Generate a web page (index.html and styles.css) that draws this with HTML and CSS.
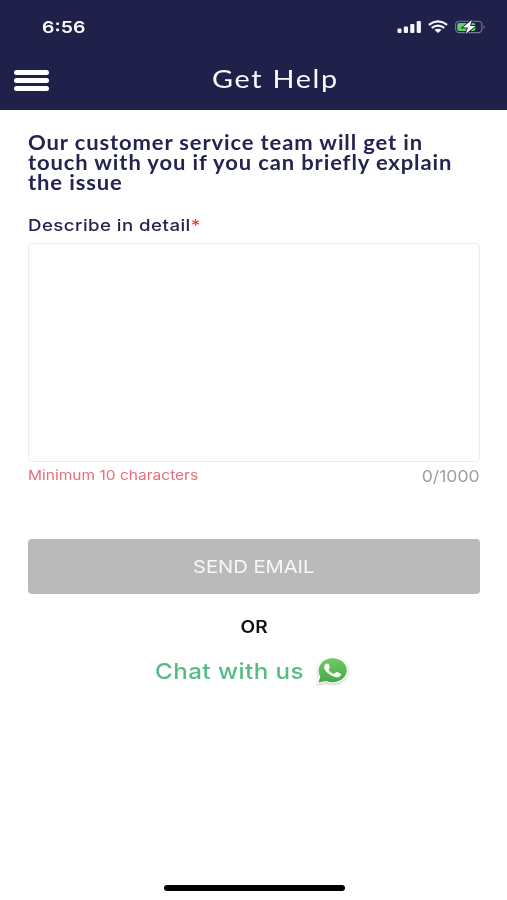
FILE: index.html
```html
<!DOCTYPE html>
<html lang="en">
<head>
<meta charset="utf-8">
<meta name="viewport" content="width=device-width, initial-scale=1">
<title>Get Help</title>
<link rel="stylesheet" href="styles.css">
</head>
<body>
<header class="header">
  <div class="status">
    <span class="time">6:56</span>
    <svg class="status-icons" width="92" height="16" viewBox="0 0 92 16" aria-hidden="true">
      <g fill="#f6f6ff">
        <rect x="0.5" y="9.6" width="4" height="4.4" rx="1"/>
        <rect x="6.8" y="7.6" width="4.2" height="6.4" rx="1"/>
        <rect x="13.2" y="4.9" width="4.2" height="9.1" rx="1"/>
        <rect x="19.7" y="2" width="4.2" height="12" rx="1"/>
        <path d="M41 14 37.4 10.8Q41 8.5 44.600 10.8Z"/>
      </g>
      <g fill="none" stroke="#f6f6ff" stroke-width="2.1">
        <path d="M31.800 5.800Q41 -1 50.200 5.800"/>
        <path d="M34.700 8.900Q41 4.200 47.300 8.900"/>
      </g>
      <rect x="58.600" y="2.200" width="26.300" height="11.400" rx="3.600" fill="none" stroke="#77799b" stroke-width="1.100"/>
      <path d="M86.500 5.900Q88.800 7.900 86.500 9.900Z" fill="#77799b"/>
      <rect x="60.300" y="3.900" width="18" height="8" rx="2" fill="#60d263"/>
      <path d="M74.800 1 65.800 8.600H71L68.700 14.800 78.500 6.900H73Z" fill="#fff" stroke="#20214a" stroke-width="1.800" paint-order="stroke"/>
    </svg>
  </div>
  <div class="navbar">
    <button class="menu" aria-label="Menu"><i></i><i></i><i></i></button>
    <h1 class="title">Get Help</h1>
  </div>
</header>
<main class="content">
  <h2 class="intro">
    <span class="line line-1">Our customer service team will get in</span>
    <span class="line line-2">touch with you if you can briefly explain</span>
    <span class="line line-3">the issue</span>
  </h2>
  <label class="label" for="detail">Describe in detail<span class="required">*</span></label>
  <textarea class="detail" id="detail"></textarea>
  <div class="hints">
    <span class="minimum">Minimum 10 characters</span>
    <span class="count">0/1000</span>
  </div>
  <button class="send"><span class="send-text">SEND EMAIL</span></button>
  <p class="or"><span class="or-text">OR</span></p>
  <a class="chat">
    <span class="chat-text">Chat with us</span>
    <svg class="whatsapp" width="36" height="32" viewBox="0 0 36 32" aria-hidden="true">
      <defs>
        <linearGradient id="leaf" x1="0" y1="0" x2="0" y2="1">
          <stop offset="0" stop-color="#70ca65"/>
          <stop offset="1" stop-color="#45aa48"/>
        </linearGradient>
      </defs>
      <path class="bubble-edge" d="M4.400 27.500 6.300 21.800C1.500 12.200 8.300 3.200 18.500 3.200C27 3.200 32.800 8.600 32.800 15.200C32.800 23.500 22.400 30.300 12 25.900Z"/>
      <path d="M4.400 27.500 6.300 21.800C1.500 12.200 8.300 3.200 18.500 3.200C27 3.200 32.800 8.600 32.800 15.200C32.800 23.500 22.400 30.300 12 25.900Z" fill="url(#leaf)"/>
      <path d="M11.200 9.400C12.400 8 14.200 8.200 14.800 9.600L15.800 11.900C16.200 12.900 14.500 13.800 14.600 14.500C15.600 16.600 17.700 18.100 20 18.800C21.100 18.900 21.900 16.800 23 17.100L26.300 18.500C27.700 19.200 26.700 21 25.400 21.700C22.600 23.200 18.200 21.300 15.400 19.300C12 16.900 8.300 12.700 11.200 9.400Z" fill="#fff"/>
    </svg>
  </a>
</main>
<div class="home-indicator"></div>
</body>
</html>
```

FILE: styles.css
```css
* {
  box-sizing: border-box;
}

body {
  margin: 0;
  height: 900px;
  display: flex;
  flex-direction: column;
  overflow: hidden;
  background: #fff;
  color: #242451;
  font-family: Inter, "Liberation Sans", sans-serif;
}

button {
  border: 0;
  padding: 0;
  font-family: inherit;
}

.header {
  height: 110px;
  flex: none;
  background: #20214a;
  color: #fafaff;
}

.status {
  height: 54px;
  padding: 0 14px 0 42px;
  display: flex;
  align-items: center;
  justify-content: space-between;
}

.time {
  font-size: 16.5px;
  font-weight: 600;
  transform: scaleX(1.18);
  transform-origin: left;
}

.status-icons {
  margin-right: 4px;
}

.navbar {
  height: 52px;
  padding-left: 14px;
  display: flex;
  align-items: center;
}

.menu {
  width: 35px;
  display: grid;
  gap: 3px;
  background: none;
}

.menu i {
  height: 5px;
  border-radius: 3px;
  background: #fff;
}

.title {
  margin: 0 0 4px 163px;
  font: 400 25px/30px Lato, sans-serif;
  letter-spacing: 1.5px;
  white-space: nowrap;
  transform: scaleX(1.15);
  transform-origin: left;
}

.content {
  padding: 22px 27px 0 28px;
  display: flex;
  flex-direction: column;
}

.intro {
  margin: 0;
  font: 700 20px/20px Lato, sans-serif;
  letter-spacing: 0.8px;
}

.line {
  display: block;
  width: max-content;
  white-space: nowrap;
  transform-origin: left;
}

.line-1 {
  transform: scaleX(1.1);
}

.line-2 {
  transform: scaleX(1.1);
}

.line-3 {
  transform: scaleX(1.1);
}

.label {
  width: max-content;
  margin-top: 23px;
  font-size: 16.5px;
  font-weight: 500;
  line-height: 20px;
  letter-spacing: 0.4px;
  transform: scaleX(1.13);
  transform-origin: left;
}

.required {
  color: #f03a32;
}

.detail {
  height: 219px;
  margin-top: 8px;
  border: 1px solid #ececec;
  border-radius: 4px;
  resize: none;
  outline: none;
}

.hints {
  display: flex;
  justify-content: space-between;
  height: 27px;
  align-items: center;
}

.minimum {
  margin-bottom: 2px;
  color: #e5707b;
  font-size: 13.5px;
  transform: scaleX(1.15);
  transform-origin: left;
}

.count {
  color: #a0a0a0;
  font-size: 16px;
  transform: scaleX(1.1);
  transform-origin: right;
}

.send {
  height: 55px;
  margin-top: 50px;
  border-radius: 4px;
  background: #bababa;
  color: #f8f8f8;
  font-size: 17.5px;
}

.send-text {
  display: inline-block;
  transform: scaleX(1.15);
}

.or {
  margin: 22px 0 0;
  text-align: center;
  color: #111;
  font-size: 17px;
  font-weight: 600;
  line-height: 22px;
}

.or-text {
  display: inline-block;
  transform: scaleX(1.12);
}

.chat {
  margin: 17px 0 0 127px;
  width: 195px;
  display: flex;
  align-items: center;
  justify-content: space-between;
}

.chat-text {
  color: #55bd83;
  font-size: 22px;
  font-weight: 500;
  letter-spacing: 0.4px;
  white-space: nowrap;
  transform: scaleX(1.1);
  transform-origin: left;
}

.bubble-edge {
  fill: #fff;
  stroke: #fff;
  stroke-width: 2.5px;
  filter: drop-shadow(0 1px 1px rgba(0, 0, 0, 0.25));
}

.home-indicator {
  width: 181px;
  height: 6px;
  margin: auto auto 9px 164px;
  border-radius: 3px;
  background: #000;
}
```
